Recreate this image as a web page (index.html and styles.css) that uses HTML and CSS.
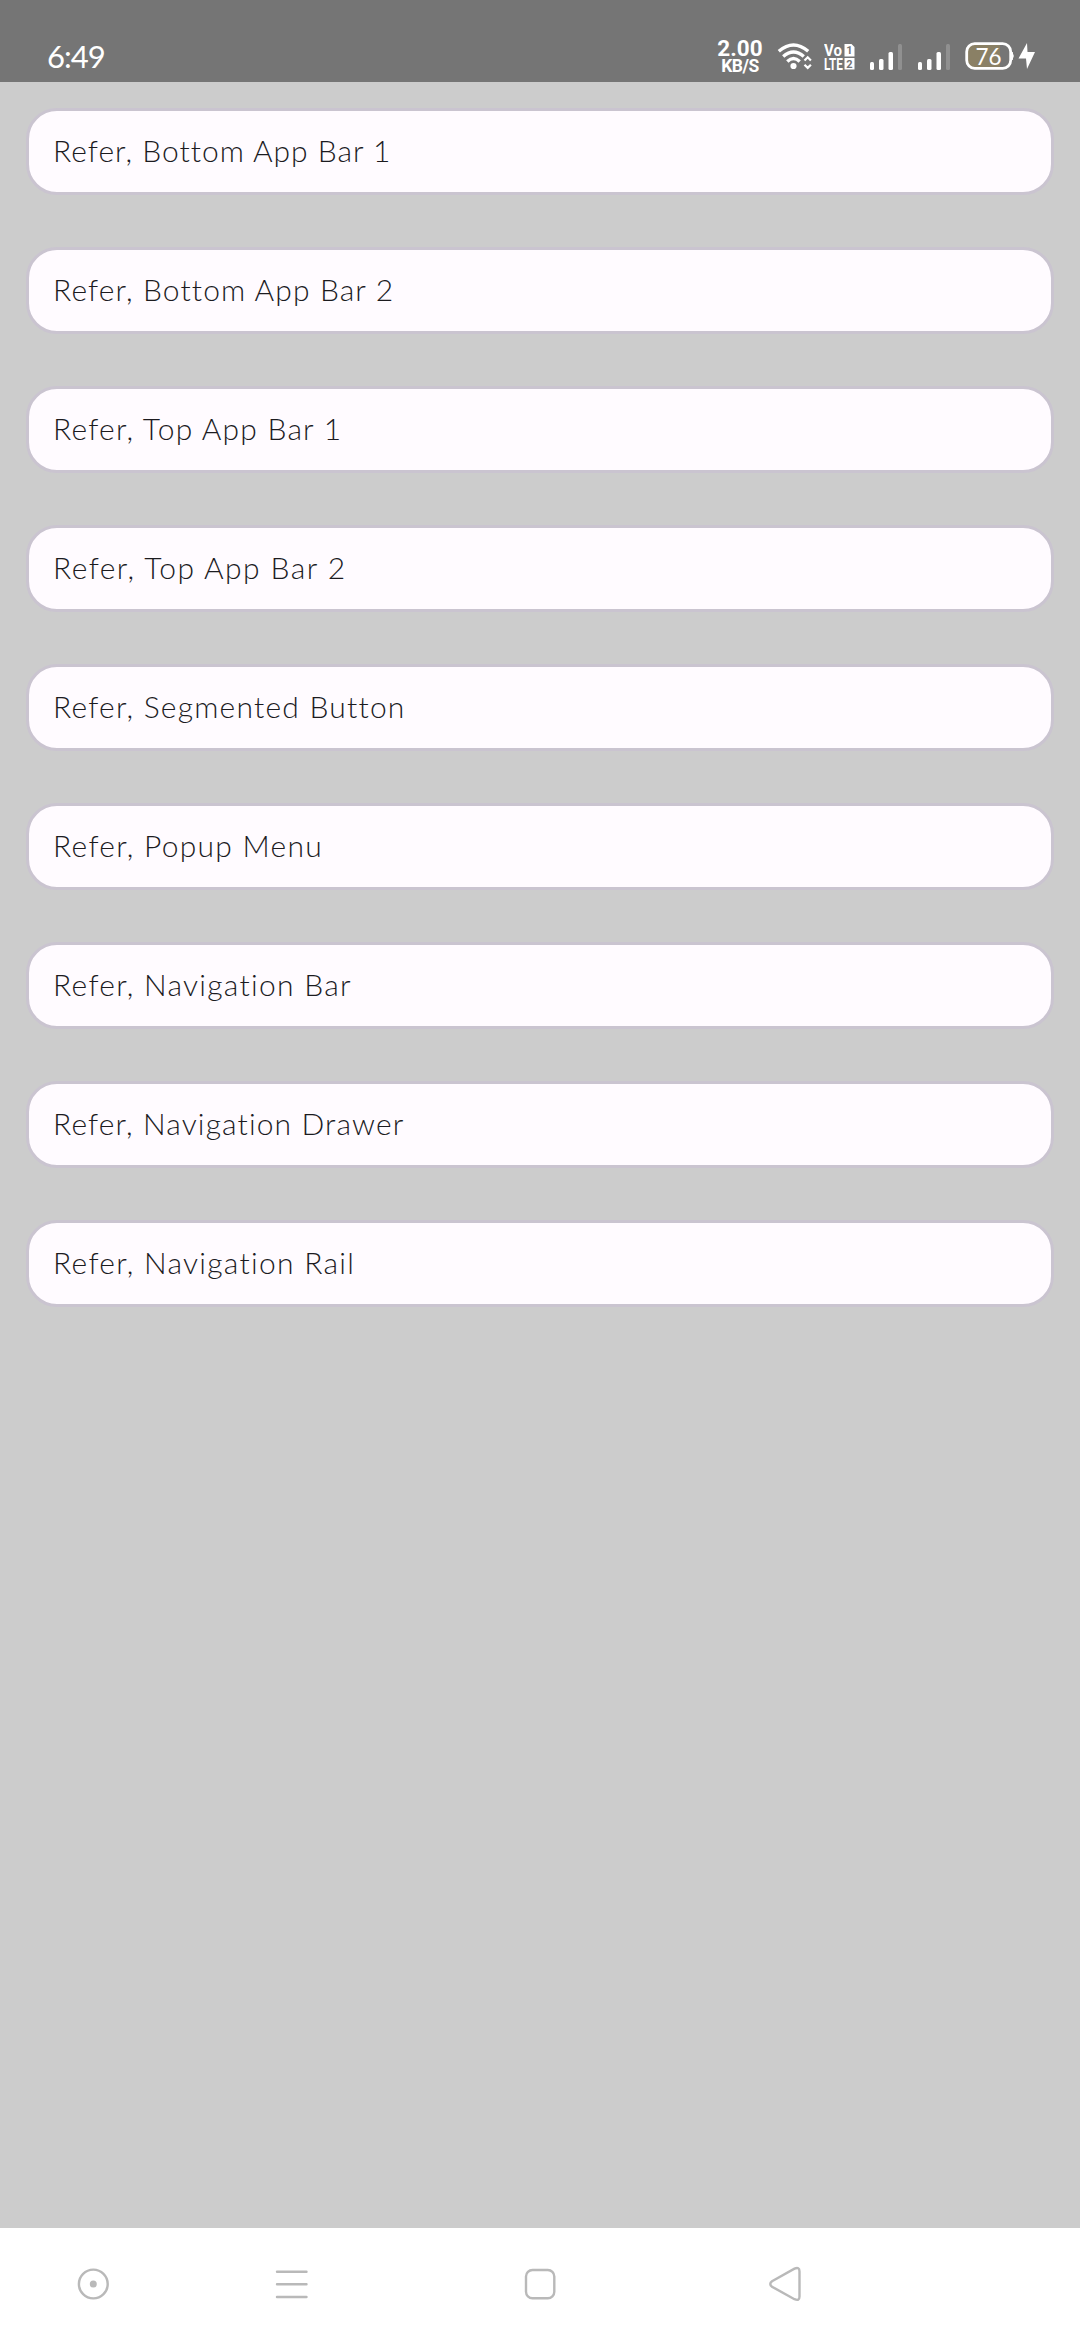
FILE: index.html
```html
<!DOCTYPE html>
<html lang="en">
<head>
<meta charset="utf-8">
<title>Refer</title>
<link rel="stylesheet" href="styles.css">
</head>
<body>
<div class="screen">
  <header class="status">
    <span class="clock">6:49</span>
    <div class="indicators">
      <div class="speed"><span class="rate">2.00</span><span class="unit">KB/S</span></div>
      <svg class="wifi" width="36" height="28" viewBox="0 0 36 28">
        <g fill="none" stroke="#fff" stroke-width="3.4"><path d="M1.800 9.200Q16.500-3.400 31.200 9.200"/><path d="M6.200 14.500Q16.500 5.500 26.800 14.500"/><path d="M10.300 19.400Q16.500 13.500 22.700 19.400"/></g>
        <circle cx="16.500" cy="24" r="3.100" fill="#fff"/>
        <path d="M27.500 18.500l3.200-3.200 3.200 3.200M27.500 22.700l3.200 3.200 3.200-3.200" fill="none" stroke="#fff" stroke-width="2.200"/>
      </svg>
      <svg class="volte" width="31" height="32" viewBox="0 -3 31 32">
        <g class="volte-text"><text x="0" y="11.700" textLength="18" lengthAdjust="spacingAndGlyphs">Vo</text><text x="0" y="25.500" textLength="19" lengthAdjust="spacingAndGlyphs">LTE</text></g>
        <path d="M20.500 0h7l3 3v9.500h-10zM20.500 14h10v11.500h-10z" fill="#fff"/>
        <g class="volte-sim"><text x="25.500" y="10">1</text><text x="25.500" y="23.500">2</text></g>
      </svg>
      <svg class="signal" width="34" height="26" viewBox="0 0 34 26" fill="#fff"><rect x="1" y="18" width="4" height="8" rx="1.500"/><rect x="10" y="15" width="4.500" height="11" rx="1.500"/><rect x="19.500" y="8" width="4.500" height="18" rx="1.500"/><rect x="29" y="0" width="4" height="26" rx="1.500" opacity=".2"/></svg>
      <svg class="signal" width="34" height="26" viewBox="0 0 34 26" fill="#fff"><rect x="1" y="18" width="4" height="8" rx="1.500"/><rect x="10" y="15" width="4.500" height="11" rx="1.500"/><rect x="19.500" y="8" width="4.500" height="18" rx="1.500"/><rect x="29" y="0" width="4" height="26" rx="1.500" opacity=".2"/></svg>
      <svg class="battery" width="70" height="32" viewBox="0 -2 70 32">
        <path d="M9 3h26v22H9q-6 0-6-6V9q0-6 6-6z" fill="#8a8065"/>
        <rect x="1.700" y="1.700" width="44" height="24.600" rx="8" fill="none" stroke="#fff" stroke-width="2.800"/>
        <path d="M47 10q2.500 4 0 8z" fill="#fff" stroke="#fff"/>
        <text class="level" x="23.500" y="22.500" textLength="26" lengthAdjust="spacingAndGlyphs">76</text>
        <path d="M62 1L53.500 16.500h7.500l1 10.500 8-17h-7.500z" fill="#fff"/>
      </svg>
    </div>
  </header>
  <main class="list">
    <div class="card">Refer, Bottom App Bar 1</div>
    <div class="card snug">Refer, Bottom App Bar 2</div>
    <div class="card wide">Refer, Top App Bar 1</div>
    <div class="card widest">Refer, Top App Bar 2</div>
    <div class="card wide">Refer, Segmented Button</div>
    <div class="card wider">Refer, Popup Menu</div>
    <div class="card wider">Refer, Navigation Bar</div>
    <div class="card snug">Refer, Navigation Drawer</div>
    <div class="card wider">Refer, Navigation Rail</div>
  </main>
  <nav class="navbar">
    <svg viewBox="0 0 40 40"><circle cx="20.300" cy="20" r="14.400"/><circle class="dot" cx="20.300" cy="20" r="3.500"/></svg>
    <svg viewBox="0 0 40 40"><path d="M6 7.700h29.500M6 20.300h29.500M6 33h29.500"/></svg>
    <svg viewBox="0 0 40 40"><rect x="6" y="6" width="28.300" height="28.300" rx="6.500"/></svg>
    <svg viewBox="0 0 40 40"><path d="M7 17.300L29.500 4.700Q34.500 2.500 34.500 7.500V32.500Q34.500 37.500 29.500 35.200L7 22.700Q3.500 20 7 17.300z"/></svg>
  </nav>
</div>
</body>
</html>
```
FILE: styles.css
```css
body { margin: 0; }

.screen {
  display: flex;
  flex-direction: column;
  width: 1080px;
  height: 2340px;
  background: #ccc;
}

.status {
  display: flex;
  justify-content: space-between;
  align-items: flex-start;
  box-sizing: border-box;
  height: 82px;
  padding: 38px 45px 0 47px;
  background: #757575;
  color: #fff;
}

.clock {
  font: 400 31px/36px Lato, sans-serif;
  letter-spacing: -1px;
}

.indicators { display: flex; align-items: flex-start; }

.speed {
  display: flex;
  flex-direction: column;
  align-items: center;
  width: 46px;
  font-family: Roboto, sans-serif;
  font-weight: 700;
}

.rate { font-size: 22.5px; line-height: 20px; }
.unit { font-size: 17.5px; line-height: 17px; letter-spacing: -0.5px; }

.wifi { margin: 4px 0 0 14px; }
.volte { margin: 3px 0 0 11px; }
.volte-text { font: 700 16px Roboto, sans-serif; fill: #fff; }
.volte-sim { font: 700 11px Roboto, sans-serif; fill: #757575; text-anchor: middle; }
.signal { margin: 6px 0 0 14px; }
.battery { margin: 2px 0 0 14px; }
.level { font: 400 24px Lato, sans-serif; fill: #fff; text-anchor: middle; }

.list {
  display: flex;
  flex: 1;
  flex-direction: column;
  gap: 52px;
  padding: 26px 26px 0;
}

.card {
  box-sizing: border-box;
  height: 87px;
  padding: 0 24px;
  border: 3px solid #cac4d0;
  border-radius: 31px;
  background: #fffbff;
  color: #1c1b1f;
  font: 300 30px/79px Lato, sans-serif;
  letter-spacing: 1px;
  white-space: nowrap;
}

.snug { letter-spacing: 1.12px; }
.wide { letter-spacing: 1.22px; }
.wider { letter-spacing: 1.27px; }
.widest { letter-spacing: 1.43px; }

.navbar {
  display: flex;
  align-items: center;
  box-sizing: border-box;
  height: 112px;
  padding-left: 73px;
  background: #fff;
}

.navbar svg {
  width: 40px;
  height: 40px;
  fill: none;
  stroke: #b9b9b9;
  stroke-width: 2.4;
  stroke-linecap: round;
}

.navbar svg + svg { margin-left: 158px; }
.navbar svg:nth-child(3) { margin-left: 209px; }
.navbar svg:nth-child(4) { margin-left: 205px; }
.navbar .dot { fill: #b9b9b9; stroke: none; }
```
